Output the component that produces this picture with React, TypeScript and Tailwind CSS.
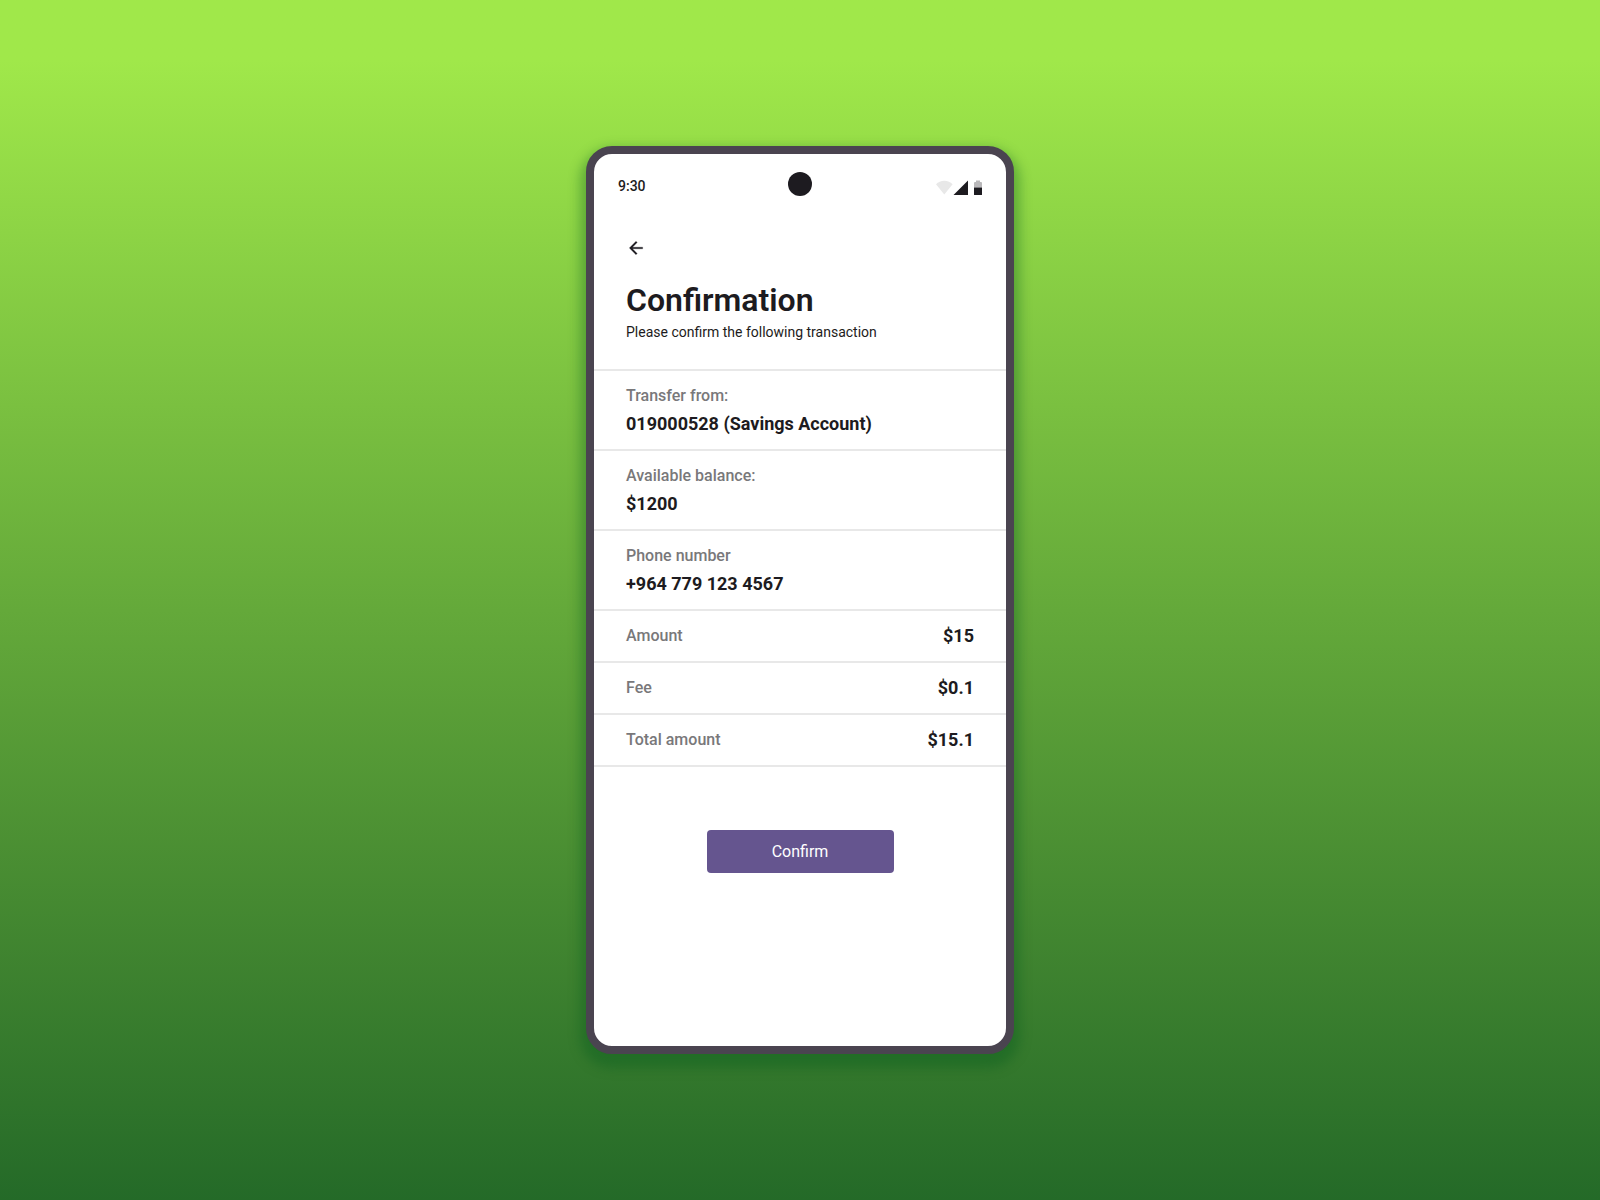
const accounts = [
  { label: "Transfer from:", value: "019000528 (Savings Account)" },
  { label: "Available balance:", value: "$1200" },
  { label: "Phone number", value: "+964 779 123 4567" },
];

const totals = [
  { label: "Amount", value: "$15" },
  { label: "Fee", value: "$0.1" },
  { label: "Total amount", value: "$15.1" },
];

function StatusBar() {
  return (
    <div className="grid h-[52px] grid-cols-3 items-end px-6 pb-2.5">
      <span className="text-sm leading-5 font-medium">9:30</span>
      <span className="h-6 w-6 justify-self-center rounded-full bg-[#1d1b20]" />
      <span className="flex items-center justify-self-end">
        <svg viewBox="0 0 46 17" className="h-[17px] w-[46px]" role="img" aria-label="Wi-Fi, signal, battery">
          <path d="M0 5.2C2.2 3 5 1.8 8.300 1.8S14.400 3 16.600 5.200L8.300 15.500Z" fill="#e8e8e8" />
          <path d="M17.500 16 32 1.500V16Z" fill="#1d1b20" />
          <path d="M38 8.500V4Q38 3 39 3H40V1.500H44V3H45Q46 3 46 4V8.500Z" fill="#b9b8ba" />
          <path d="M38 8.500H46V15.500Q46 16 45.500 16H38.500Q38 16 38 15.500Z" fill="#1d1b20" />
        </svg>
      </span>
    </div>
  );
}

export default function App() {
  return (
    <main className="flex min-h-screen items-center justify-center bg-linear-to-b from-[#a0e84a] from-5% to-[#246a28] py-10 font-[Roboto,sans-serif] text-[#1d1b20]">
      <section className="flex min-h-[908px] w-full max-w-[428px] flex-col rounded-[26px] border-8 border-[#4a4450] bg-white shadow-[0_8px_12px_6px_rgba(0,90,30,0.35)]">
        <StatusBar />
        <header className="px-8 pt-8 pb-[27px]">
          <button type="button" aria-label="Back" className="block h-5 w-5">
            <svg viewBox="0 0 24 24" className="h-5 w-5" fill="currentColor" stroke="currentColor" strokeWidth="0.300">
              <path d="M20 11H7.830l5.590-5.590L12 4l-8 8 8 8 1.410-1.410L7.830 13H20z" />
            </svg>
          </button>
          <h1 className="mt-6 text-[32px] leading-9 font-semibold">Confirmation</h1>
          <p className="mt-1 text-sm leading-5">Please confirm the following transaction</p>
        </header>
        <dl className="border-t-2 border-[#e8e8e8]">
          {accounts.map((row) => (
            <div key={row.label} className="border-b-2 border-[#e8e8e8] px-8 pt-3 pb-2.5">
              <dt className="text-base leading-[26px] font-medium text-[#79787a]">{row.label}</dt>
              <dd className="text-lg leading-[30px] font-bold">{row.value}</dd>
            </div>
          ))}
          {totals.map((row) => (
            <div
              key={row.label}
              className="flex items-center justify-between border-b-2 border-[#e8e8e8] px-8 py-3"
            >
              <dt className="text-base leading-[26px] font-medium text-[#79787a]">{row.label}</dt>
              <dd className="text-lg leading-[26px] font-bold">{row.value}</dd>
            </div>
          ))}
        </dl>
        <button
          type="button"
          className="mx-auto mt-[63px] h-[43px] w-[187px] rounded bg-[#65558f] text-base text-white"
        >
          Confirm
        </button>
      </section>
    </main>
  );
}
